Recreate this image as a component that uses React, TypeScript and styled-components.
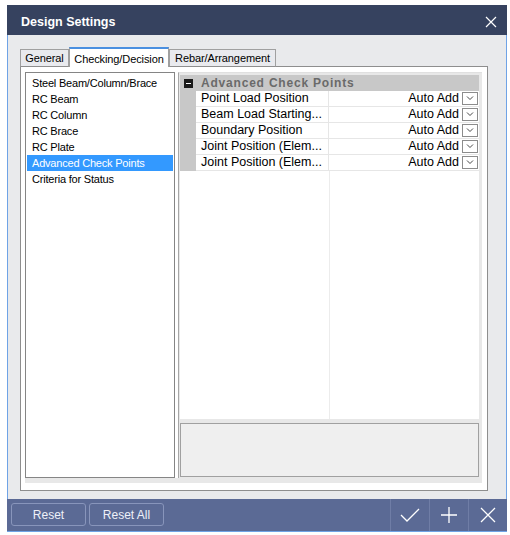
import styled, { createGlobalStyle } from "styled-components";

const GlobalStyle = createGlobalStyle`
    html, body {
        margin: 0;
        padding: 0;
        background: #ffffff;
    }
    body {
        font-family: "Liberation Sans", Arial, sans-serif;
    }
`;

const Page = styled.div`
    padding: 5px 0 0 7px;
`;

const Window = styled.div`
    width: 500px;
    height: 527px;
    box-sizing: border-box;
    border: 1px solid #6fa3e6;
    border-top: none;
    background: #e9eaec;
    display: flex;
    flex-direction: column;
`;

const TitleBar = styled.div`
    height: 30px;
    background: #36425f;
    display: flex;
    align-items: center;
    justify-content: space-between;
    padding: 3px 10px 0 14px;
    box-sizing: border-box;
    margin: 0 -1px;
`;

const Title = styled.span`
    color: #ffffff;
    font-weight: bold;
    font-size: 12.5px;
`;

const Body = styled.div`
    flex: 1;
    padding: 12px 18px 7px 12px;
    display: flex;
    flex-direction: column;
`;

const TabStrip = styled.div`
    display: flex;
    align-items: flex-end;
    height: 20px;
    margin-bottom: -1px;
    position: relative;
    z-index: 1;
`;

const Tab = styled.div<{ $active?: boolean; $w: number }>`
    width: ${p => p.$w}px;
    box-sizing: border-box;
    height: ${p => (p.$active ? 20 : 18)}px;
    border: 1px solid #a0a0a0;
    border-top: ${p => (p.$active ? "2px solid #4a8fe0" : "1px solid #a0a0a0")};
    border-bottom: ${p => (p.$active ? "none" : "1px solid #8e8e8e")};
    background: ${p => (p.$active ? "#ffffff" : "#e9eaee")};
    font-size: 11px;
    letter-spacing: -0.1px;
    color: #000;
    display: flex;
    align-items: center;
    justify-content: center;
    padding-top: ${p => (p.$active ? "1px" : "0")};
`;

const Panel = styled.div`
    height: 425px;
    box-sizing: border-box;
    border: 1px solid #8e8e8e;
    background: #ffffff;
    padding: 5px 5px 7px 4px;
    display: flex;
    flex-direction: column;
`;

const Split = styled.div`
    flex: 1;
    display: flex;
    gap: 3px;
    min-height: 0;
`;

const Strip = styled.div`
    height: 5px;
    background: #e8e8e8;
`;

const List = styled.div`
    width: 150px;
    box-sizing: border-box;
    border: 1px solid #858585;
    padding: 2px 1px;
    display: flex;
    flex-direction: column;
`;

const ListItem = styled.div<{ $selected?: boolean }>`
    height: 16px;
    line-height: 16px;
    padding-left: 5px;
    font-size: 11px;
    letter-spacing: -0.2px;
    background: ${p => (p.$selected ? "#3399ff" : "transparent")};
    color: ${p => (p.$selected ? "#ffffff" : "#000000")};
    white-space: nowrap;
`;

const RightPanel = styled.div`
    flex: 1;
    box-sizing: border-box;
    border-left: 1px solid #a6a6a6;
    border-top: 1px solid #e0e0e0;
    background: #e8e8e8;
    padding: 2px 3px 0 1px;
    display: flex;
    flex-direction: column;
    gap: 4px;
`;

const Grid = styled.div`
    flex: 1;
    background: #ffffff;
    display: flex;
    flex-direction: column;
    font-size: 12.5px;
`;

const GroupHeader = styled.div`
    height: 16px;
    background: #c8c8c8;
    display: flex;
    align-items: center;
    padding-left: 4px;
    gap: 8px;
`;

const Collapse = styled.div`
    width: 9px;
    height: 9px;
    background: #1a1a1a;
    display: flex;
    align-items: center;
    justify-content: center;
    &::after {
        content: "";
        width: 5px;
        height: 1px;
        background: #ffffff;
    }
`;

const GroupTitle = styled.span`
    font-weight: bold;
    color: #6a6a6a;
    letter-spacing: 0.8px;
    font-size: 12px;
`;

const Row = styled.div`
    height: 16px;
    display: flex;
`;

const Margin = styled.div`
    width: 16px;
    background: #c8c8c8;
`;

const NameCell = styled.div`
    width: 133px;
    box-sizing: border-box;
    padding-left: 5px;
    border-right: 1px solid #e6e6e6;
    border-bottom: 1px solid #e6e6e6;
    line-height: 15px;
    white-space: nowrap;
    overflow: hidden;
`;

const ValueCell = styled.div`
    flex: 1;
    border-bottom: 1px solid #e6e6e6;
    display: flex;
    align-items: center;
    justify-content: flex-end;
    gap: 3px;
    padding-right: 1px;
    line-height: 15px;
`;

const DropBox = styled.div`
    width: 16px;
    height: 13px;
    box-sizing: border-box;
    border: 1px solid #8c8c8c;
    background: #ffffff;
    display: flex;
    align-items: center;
    justify-content: center;
    margin-top: -1px;
`;

const Filler = styled.div`
    flex: 1;
    display: flex;
`;

const FillerLeft = styled.div`
    width: 149px;
    border-right: 1px solid #ececec;
`;

const Description = styled.div`
    height: 54px;
    box-sizing: border-box;
    border: 1px solid #a0a0a0;
    background: #efefef;
    margin-bottom: 1px;
`;

const Footer = styled.div`
    height: 32px;
    background: #5b6a95;
    display: flex;
    align-items: stretch;
    padding-left: 4px;
    margin: 0 -1px;
`;

const FooterButton = styled.div`
    width: 75px;
    height: 23px;
    box-sizing: border-box;
    margin: 4px 3px 0 0;
    border: 1px solid #8895bb;
    border-radius: 3px;
    color: #eef1f8;
    font-size: 12px;
    display: flex;
    align-items: center;
    justify-content: center;
`;

const Spacer = styled.div`
    flex: 1;
`;

const IconCell = styled.div`
    width: 38px;
    border-left: 1px solid #6f7da6;
    display: flex;
    align-items: center;
    justify-content: center;
`;

const rows = [
    "Point Load Position",
    "Beam Load Starting...",
    "Boundary Position",
    "Joint Position (Elem...",
    "Joint Position (Elem...",
];

const items = [
    "Steel Beam/Column/Brace",
    "RC Beam",
    "RC Column",
    "RC Brace",
    "RC Plate",
    "Advanced Check Points",
    "Criteria for Status",
];

const App = () => {
    return (
        <Page>
            <GlobalStyle />
            <Window>
                <TitleBar>
                    <Title>Design Settings</Title>
                    <svg width="12" height="12" viewBox="0 0 12 12">
                        <path d="M1 1 L11 11 M11 1 L1 11" stroke="#ffffff" strokeWidth="1.2" />
                    </svg>
                </TitleBar>
                <Body>
                    <TabStrip>
                        <Tab $w={49}>General</Tab>
                        <Tab $active $w={100}>Checking/Decision</Tab>
                        <Tab $w={107}>Rebar/Arrangement</Tab>
                    </TabStrip>
                    <Panel>
                        <Split>
                            <List>
                                {items.map((it, i) => (
                                    <ListItem key={i} $selected={i === 5}>{it}</ListItem>
                                ))}
                            </List>
                            <RightPanel>
                                <Grid>
                                    <GroupHeader>
                                        <Collapse />
                                        <GroupTitle>Advanced Check Points</GroupTitle>
                                    </GroupHeader>
                                    {rows.map((r, i) => (
                                        <Row key={i}>
                                            <Margin />
                                            <NameCell>{r}</NameCell>
                                            <ValueCell>
                                                Auto Add
                                                <DropBox>
                                                    <svg width="10" height="6" viewBox="0 0 10 6">
                                                        <path d="M2 1.5 L5 4.5 L8 1.5" fill="none" stroke="#333" strokeWidth="0.9" />
                                                    </svg>
                                                </DropBox>
                                            </ValueCell>
                                        </Row>
                                    ))}
                                    <Filler>
                                        <FillerLeft />
                                    </Filler>
                                </Grid>
                                <Description />
                            </RightPanel>
                        </Split>
                        <Strip />
                    </Panel>
                </Body>
                <Footer>
                    <FooterButton>Reset</FooterButton>
                    <FooterButton>Reset All</FooterButton>
                    <Spacer />
                    <IconCell>
                        <svg width="20" height="16" viewBox="0 0 20 16">
                            <path d="M1 8 L7 14 L19 2" fill="none" stroke="#ffffff" strokeWidth="1.3" />
                        </svg>
                    </IconCell>
                    <IconCell>
                        <svg width="16" height="16" viewBox="0 0 16 16">
                            <path d="M8 0 V16 M0 8 H16" stroke="#ffffff" strokeWidth="1.3" />
                        </svg>
                    </IconCell>
                    <IconCell>
                        <svg width="16" height="16" viewBox="0 0 16 16">
                            <path d="M1 1 L15 15 M15 1 L1 15" stroke="#ffffff" strokeWidth="1.3" />
                        </svg>
                    </IconCell>
                </Footer>
            </Window>
        </Page>
    );
};

export default App;
